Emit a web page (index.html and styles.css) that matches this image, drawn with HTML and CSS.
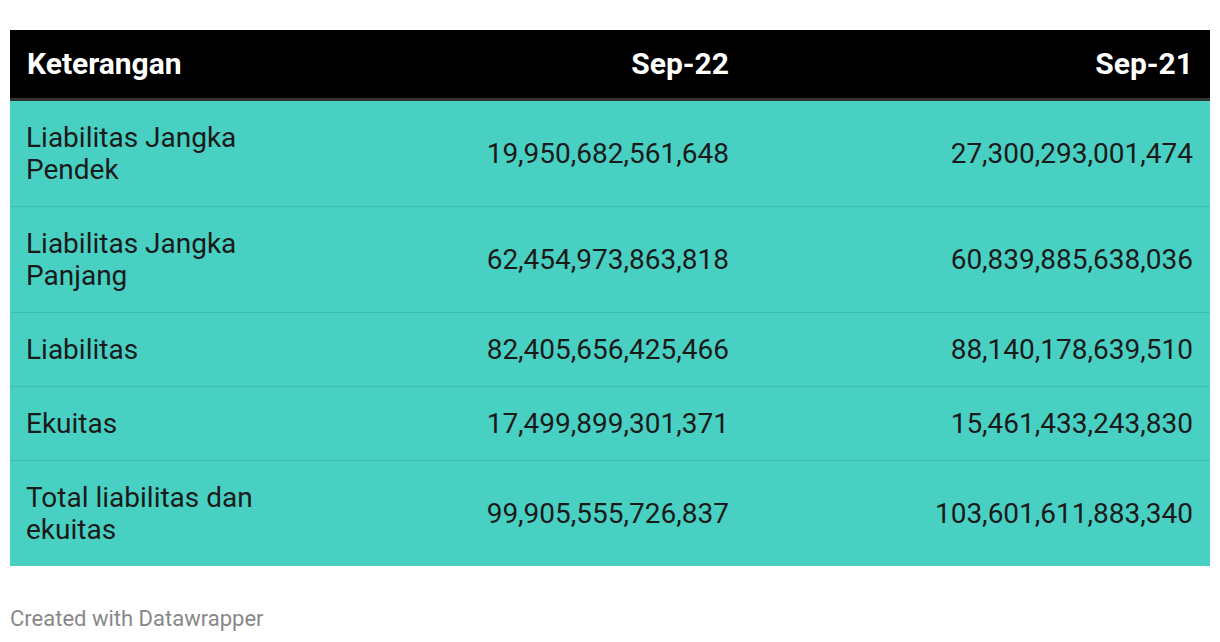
FILE: index.html
```html
<!DOCTYPE html>
<html lang="id">
<head>
<meta charset="utf-8">
<link rel="stylesheet" href="styles.css">
</head>
<body>
<div class="page">
  <table class="dw-table">
    <colgroup>
      <col class="c1"><col class="c2"><col class="c3">
    </colgroup>
    <thead>
      <tr>
        <th class="left">Keterangan</th>
        <th class="right">Sep-22</th>
        <th class="right">Sep-21</th>
      </tr>
    </thead>
    <tbody>
      <tr><td class="left">Liabilitas Jangka Pendek</td><td class="right">19,950,682,561,648</td><td class="right">27,300,293,001,474</td></tr>
      <tr><td class="left">Liabilitas Jangka Panjang</td><td class="right">62,454,973,863,818</td><td class="right">60,839,885,638,036</td></tr>
      <tr><td class="left">Liabilitas</td><td class="right">82,405,656,425,466</td><td class="right">88,140,178,639,510</td></tr>
      <tr><td class="left">Ekuitas</td><td class="right">17,499,899,301,371</td><td class="right">15,461,433,243,830</td></tr>
      <tr><td class="left">Total liabilitas dan ekuitas</td><td class="right">99,905,555,726,837</td><td class="right">103,601,611,883,340</td></tr>
    </tbody>
  </table>
  <div class="footer">Created with Datawrapper</div>
</div>
</body>
</html>
```

FILE: styles.css
```css
html, body {
  margin: 0;
  padding: 0;
  background: #ffffff;
}
.page {
  padding: 30px 10px 0 10px;
  font-family: Roboto, "Liberation Sans", sans-serif;
}
.dw-table {
  width: 1200px;
  border-collapse: collapse;
  table-layout: fixed;
}
.c1 { width: 272px; }
.c2 { width: 464px; }
.c3 { width: 464px; }
.dw-table th {
  background: #000000;
  color: #ffffff;
  font-weight: 700;
  font-size: 30px;
  line-height: 32px;
  padding: 18px 17px;
  border-bottom: 3px solid #333333;
}
.dw-table td {
  background: #48d1c3;
  color: #1a1a1a;
  font-size: 28px;
  line-height: 32px;
  padding: 21px 17px 20px 16px;
  border-bottom: 1px solid #41bdb0;
  vertical-align: middle;
}
.dw-table td.right {
  padding-left: 17px;
}
.dw-table tbody tr:last-child td {
  border-bottom: none;
}
.left { text-align: left; }
.right { text-align: right; }
.footer {
  margin-top: 40px;
  font-size: 22px;
  line-height: 26px;
  color: #888888;
}
```
